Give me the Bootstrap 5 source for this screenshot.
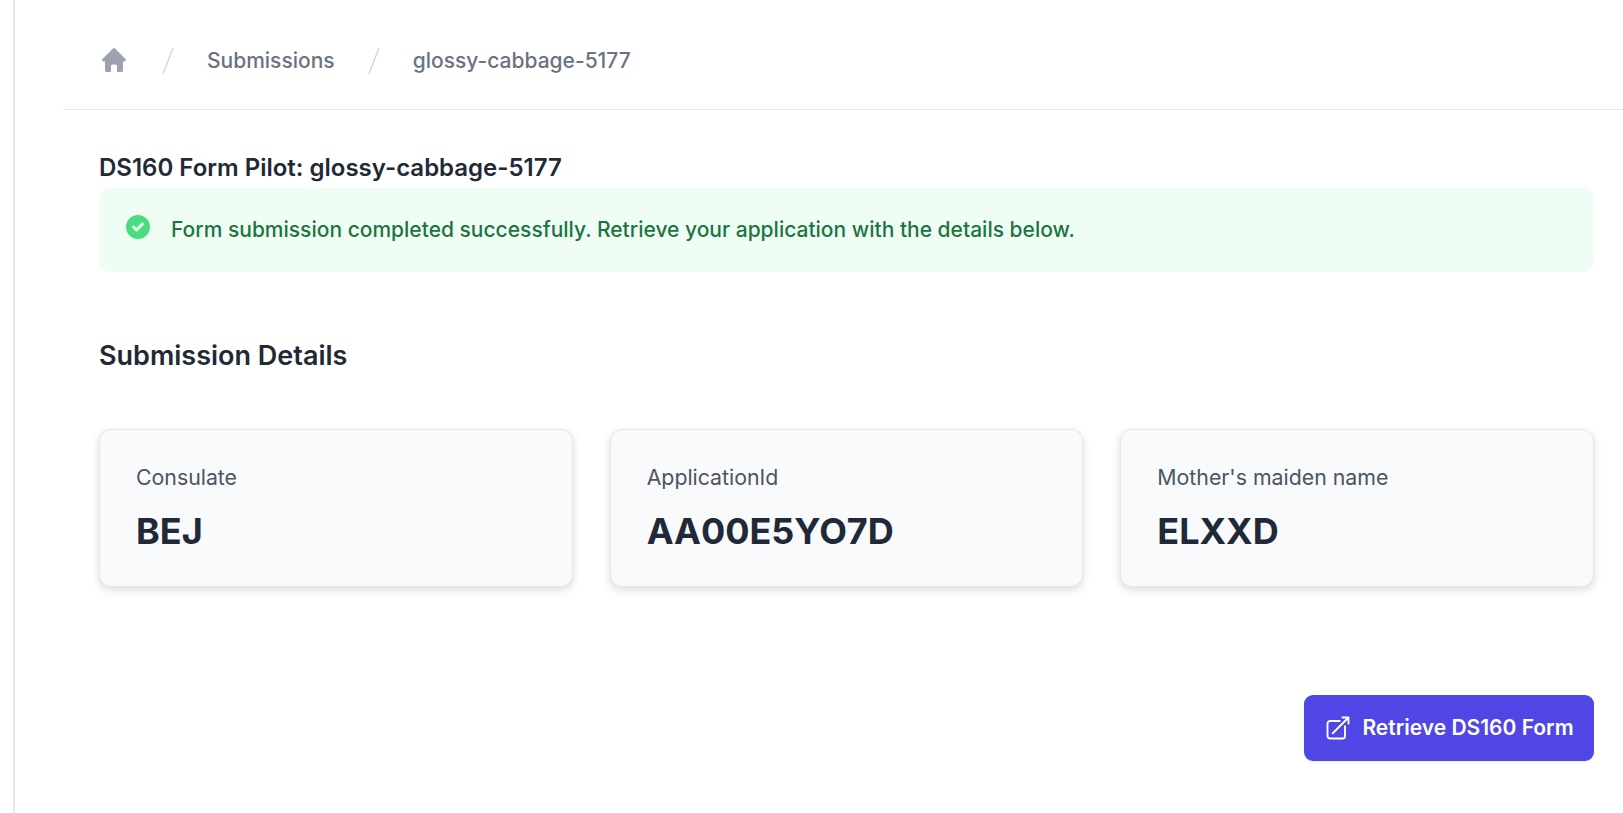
<!doctype html>
<html lang="en">
<head>
<meta charset="utf-8">
<title>DS160 Form Pilot</title>
<link href="https://cdn.jsdelivr.net/npm/bootstrap@5.3.0/dist/css/bootstrap.min.css" rel="stylesheet">
<style>
html,body{height:100%}
body{font-family:Inter,"Liberation Sans",sans-serif;background:#fff;color:#1f2937;overflow:hidden}
.shell{height:813px;margin-left:13px;border-left:2px solid #e5e7eb;padding-left:48px}
.crumbbar{height:110px;border-bottom:1px solid #e5e7eb;padding:12px 0 0 36px;font-size:21px;font-weight:500;color:#6b7280}
.crumbsep{width:14px;height:28px;margin:0 32px 0 32px;flex:none}
.crumbsep line{stroke:#d1d5db;stroke-width:1.3}
.crumbhome{width:30px;height:30px;fill:#9ca3af;margin-top:-1px}
.body-pad{padding:43px 29px 0 36px}
.page-title{font-size:24px;font-weight:600;line-height:30px;color:#1f2937;margin:0 0 5px}
.okalert{background:#f0fdf4;border:0;border-radius:10px;height:84px;padding:28px 28px 0 24px;margin:0;color:#1a7540;font-size:21px;font-weight:500;line-height:28px}
.okalert svg{width:30px;height:30px;fill:#4ade80;margin-right:18px;margin-top:-4px;flex:none}
.section-title{font-size:27px;font-weight:600;line-height:34px;margin:67px 0 0;color:#1f2937}
.stat-row{--bs-gutter-x:37px;margin-top:56px}
.stat{background:#f9fafb;border:1px solid #e5e7eb;border-radius:12px;height:158px;padding:33px 36px;box-shadow:0 3px 8px rgba(0,0,0,.14)}
.stat-label{font-size:21.3px;line-height:28px;color:#4b5563}
.stat-value{font-size:36px;font-weight:700;line-height:44px;color:#1f2937;margin-top:18px}
.action-row{margin-top:108px}
.retrieve{background:#4f46e5;border:0;border-radius:9px;color:#fff;height:66px;width:290px;font-size:21px;font-weight:600;padding:0;box-shadow:0 1px 2px rgba(0,0,0,.08)}
.retrieve:hover{background:#4338ca;color:#fff}
.retrieve svg{width:28px;height:28px;fill:none;stroke:#fff;stroke-width:1.6;stroke-linecap:round;stroke-linejoin:round;margin-right:10px}
</style>
</head>
<body>
<div class="shell">
  <nav class="crumbbar d-flex align-items-center">
    <svg class="crumbhome" viewBox="0 0 20 20"><path d="M10.7 2.3a1 1 0 0 0-1.4 0l-7 7A1 1 0 0 0 3 11h1v6a1 1 0 0 0 1 1h2.500a.5.5 0 0 0 .5-.5V14a1 1 0 0 1 1-1h2a1 1 0 0 1 1 1v3.500a.5.5 0 0 0 .5.5H15a1 1 0 0 0 1-1v-6h1a1 1 0 0 0 .7-1.700z"/></svg>
    <svg class="crumbsep" viewBox="0 0 14 28"><line x1="2" y1="27" x2="12" y2="1"/></svg>
    <span>Submissions</span>
    <svg class="crumbsep" viewBox="0 0 14 28"><line x1="2" y1="27" x2="12" y2="1"/></svg>
    <span>glossy-cabbage-5177</span>
  </nav>
  <main class="body-pad">
    <h1 class="page-title">DS160 Form Pilot: glossy-cabbage-5177</h1>
    <div class="alert okalert d-flex align-items-start" role="alert">
      <svg viewBox="0 0 20 20"><path fill-rule="evenodd" d="M10 18a8 8 0 1 0 0-16 8 8 0 0 0 0 16zm3.700-9.300a1 1 0 0 0-1.400-1.400L9 10.600 7.700 9.300a1 1 0 0 0-1.400 1.400l2 2a1 1 0 0 0 1.400 0z"/></svg>
      <span>Form submission completed successfully. Retrieve your application with the details below.</span>
    </div>
    <h2 class="section-title">Submission Details</h2>
    <div class="row stat-row">
      <div class="col-4"><div class="stat"><div class="stat-label">Consulate</div><div class="stat-value">BEJ</div></div></div>
      <div class="col-4"><div class="stat"><div class="stat-label">ApplicationId</div><div class="stat-value">AA00E5YO7D</div></div></div>
      <div class="col-4"><div class="stat"><div class="stat-label">Mother's maiden name</div><div class="stat-value">ELXXD</div></div></div>
    </div>
    <div class="action-row d-flex justify-content-end">
      <button type="button" class="btn retrieve d-inline-flex align-items-center justify-content-center">
        <svg viewBox="0 0 24 24"><path d="M13.500 6H5.250A2.250 2.250 0 0 0 3 8.250v10.500A2.250 2.250 0 0 0 5.250 21h10.500A2.250 2.250 0 0 0 18 18.750V10.500m-10.500 6L21 3m0 0h-5.250M21 3v5.250"/></svg>
        Retrieve DS160 Form
      </button>
    </div>
  </main>
</div>
<script src="https://cdn.jsdelivr.net/npm/bootstrap@5.3.0/dist/js/bootstrap.bundle.min.js"></script>
</body>
</html>
